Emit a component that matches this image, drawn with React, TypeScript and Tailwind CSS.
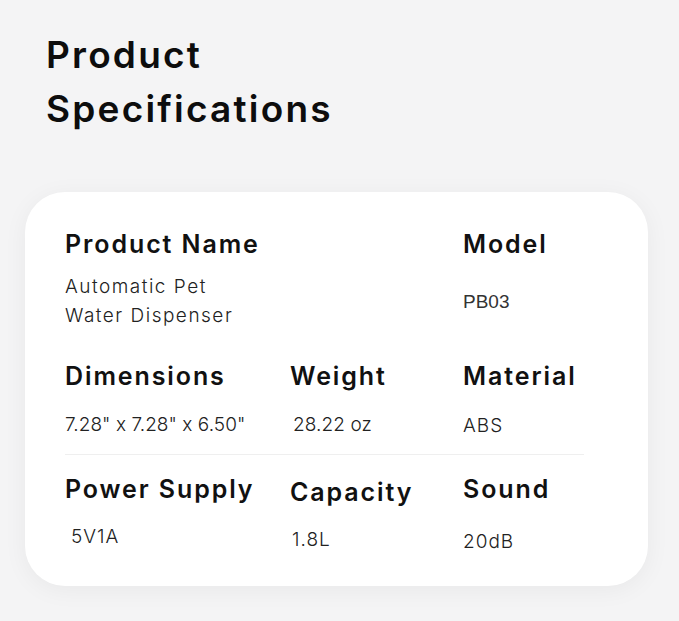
import React from "react";

const label = "text-[25px] leading-[32px] font-semibold text-[#111] tracking-[1.9px]";
const value = "text-[19px] leading-[29px] font-light text-[#222]";

export default function App() {
  return (
    <div
      className="w-[679px] h-[621px] overflow-hidden bg-[#f4f4f5] flex flex-col"
      style={{ fontFamily: "Inter, 'Noto Sans', sans-serif" }}
    >
      <h1 className="pl-[46px] pt-[28px] text-[37px] leading-[54px] font-semibold text-[#0d0d0d] tracking-[2.2px]">
        Product
        <br />
        Specifications
      </h1>

      <div className="ml-[25px] mt-[56px] w-[623px] h-[394px] rounded-[40px] bg-white shadow-[0_4px_24px_rgba(0,0,0,0.05)] pt-[36px] pl-[40px]">
        {/* Row 1 */}
        <div className="grid grid-cols-[398px_1fr]">
          <div>
            <div className={label}>Product Name</div>
            <div className={`${value} mt-[12px] tracking-[1.5px]`}>
              Automatic Pet
              <br />
              Water Dispenser
            </div>
          </div>
          <div>
            <div className={label}>Model</div>
            <div
              className="mt-[27px] text-[19px] leading-[29px] text-[#333]"
              style={{ fontFamily: "'Liberation Sans', Arial, sans-serif" }}
            >
              PB03
            </div>
          </div>
        </div>

        {/* Row 2 */}
        <div className="grid grid-cols-[225px_173px_1fr] mt-[30px]">
          <div>
            <div className={label}>Dimensions</div>
            <div className={`${value} mt-[18px] tracking-[0.05px]`}>7.28" x 7.28" x 6.50"</div>
          </div>
          <div>
            <div className={label}>Weight</div>
            <div className={`${value} mt-[18px] pl-[3px] tracking-[0.1px]`}>28.22 oz</div>
          </div>
          <div>
            <div className={label}>Material</div>
            <div className={`${value} mt-[19px] tracking-[1px]`}>ABS</div>
          </div>
        </div>

        <div className="mt-[14px] w-[519px] h-px bg-[#efefef]" />

        {/* Row 3 */}
        <div className="grid grid-cols-[225px_173px_1fr] mt-[18px]">
          <div>
            <div className={label}>Power Supply</div>
            <div className={`${value} mt-[17px] pl-[6px] tracking-[1px]`}>5V1A</div>
          </div>
          <div className="pt-[3px]">
            <div className={label}>Capacity</div>
            <div className={`${value} mt-[17px] pl-[2px] tracking-[1px]`}>1.8L</div>
          </div>
          <div>
            <div className={label}>Sound</div>
            <div className={`${value} mt-[22px] tracking-[1px]`}>20dB</div>
          </div>
        </div>
      </div>
    </div>
  );
}
